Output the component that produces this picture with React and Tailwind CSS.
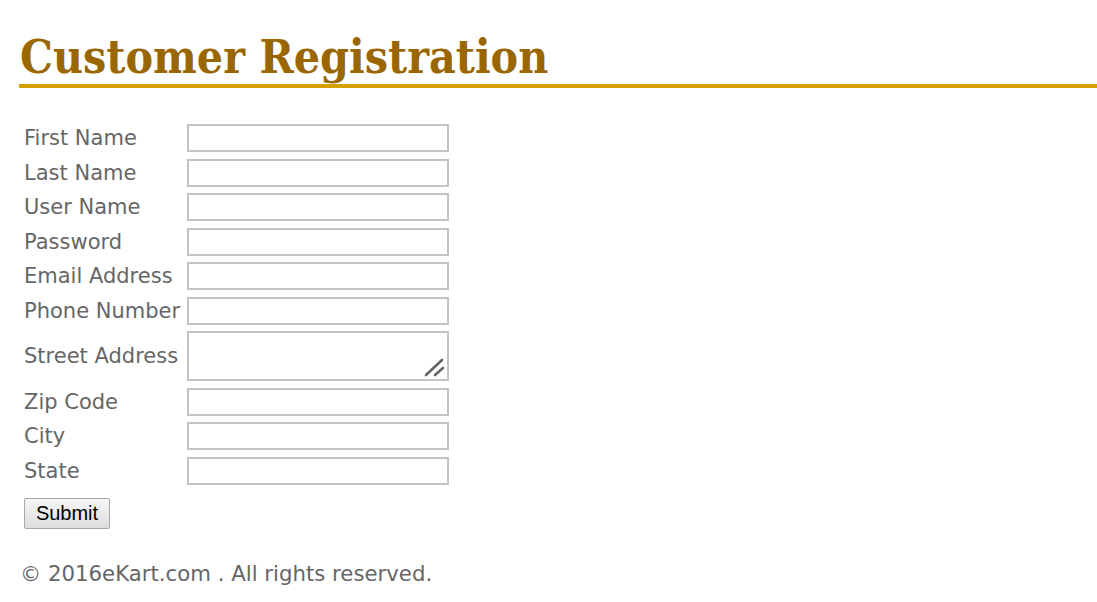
import React from "react";

const fields = [
  { label: "First Name" },
  { label: "Last Name" },
  { label: "User Name" },
  { label: "Password", type: "password" },
  { label: "Email Address" },
  { label: "Phone Number" },
  { label: "Street Address", area: true },
  { label: "Zip Code" },
  { label: "City" },
  { label: "State" },
];

export default function App() {
  return (
    <div className="bg-white w-[1097px] h-[602px] overflow-hidden pl-[19px]">
      <h1
        className="pt-[31px] text-[46px] leading-[53px] font-bold text-[#996600] pl-[1px]"
        style={{ fontFamily: '"DejaVu Serif Condensed", "DejaVu Serif", serif', fontStretch: "condensed" }}
      >
        Customer Registration
      </h1>
      <div className="h-[4px] bg-[#d4a000]" />
      <div
        className="pt-[36px] pl-[5px] text-[21px] text-[#666666]"
        style={{ fontFamily: '"DejaVu Sans", sans-serif' }}
      >
        <div className="flex flex-col gap-[6.5px]">
          {fields.map((f) => (
            <div key={f.label} className="flex items-center">
              <div className="w-[163px] leading-[26px]">{f.label}</div>
              {f.area ? (
                <div className="relative w-[262px] h-[50px]">
                  <textarea className="block w-[262px] h-[50px] border-2 border-[#c4c4c4] bg-white resize-none outline-none" />
                  <svg
                    className="absolute right-[3px] bottom-[3px]"
                    width="22"
                    height="20"
                    viewBox="0 0 22 20"
                  >
                    <line x1="2" y1="17" x2="18" y2="2" stroke="#666" strokeWidth="2.6" strokeLinecap="round" />
                    <line x1="11" y1="17" x2="19" y2="10" stroke="#666" strokeWidth="2.6" strokeLinecap="round" />
                  </svg>
                </div>
              ) : (
                <input
                  type={f.type || "text"}
                  className="w-[262px] h-[28px] border-2 border-[#c4c4c4] bg-white outline-none"
                />
              )}
            </div>
          ))}
        </div>
        <button
          className="mt-[13px] w-[86px] h-[31px] border border-[#a9a9a9] rounded-[2px] bg-gradient-to-b from-[#f6f6f6] to-[#dddddd] text-[20px] text-black leading-none"
          style={{ fontFamily: '"Liberation Sans", Arial, sans-serif' }}
        >
          Submit
        </button>
        <div className="mt-[28px] -ml-[4px] text-[21.25px] text-[#666666]">
          © 2016eKart.com . All rights reserved.
        </div>
      </div>
    </div>
  );
}
